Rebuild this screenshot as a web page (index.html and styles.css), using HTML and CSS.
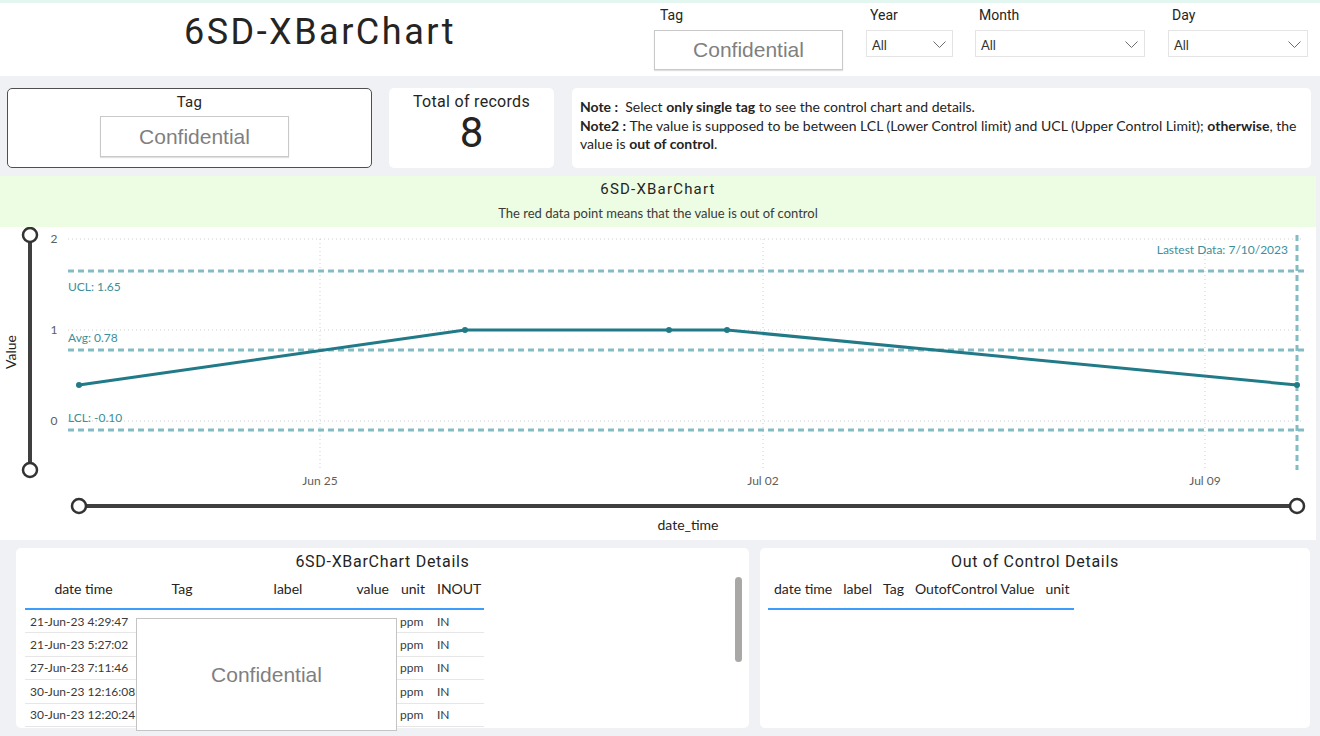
FILE: index.html
```html
<!DOCTYPE html>
<html>
<head>
<meta charset="utf-8">
<title>6SD-XBarChart</title>
<link rel="stylesheet" href="styles.css">
</head>
<body>
<div class="topstrip"></div>
<header class="header">
  <div class="title-wrap"><h1 class="title">6SD-XBarChart</h1></div>
  <div class="filters">
    <div class="filter f-tag">
      <div class="flabel">Tag</div>
      <div class="conf-box">Confidential</div>
    </div>
    <div class="filter f-year">
      <div class="flabel">Year</div>
      <div class="dropdown"><span>All</span><svg class="chev" width="13" height="7" viewBox="0 0 13 7"><path d="M0.5 0.5 L6.5 6.5 L12.5 0.5" fill="none" stroke="#6b6b6b" stroke-width="1"/></svg></div>
    </div>
    <div class="filter f-month">
      <div class="flabel">Month</div>
      <div class="dropdown"><span>All</span><svg class="chev" width="13" height="7" viewBox="0 0 13 7"><path d="M0.5 0.5 L6.5 6.5 L12.5 0.5" fill="none" stroke="#6b6b6b" stroke-width="1"/></svg></div>
    </div>
    <div class="filter f-day">
      <div class="flabel">Day</div>
      <div class="dropdown"><span>All</span><svg class="chev" width="13" height="7" viewBox="0 0 13 7"><path d="M0.5 0.5 L6.5 6.5 L12.5 0.5" fill="none" stroke="#6b6b6b" stroke-width="1"/></svg></div>
    </div>
  </div>
</header>

<section class="cards">
  <div class="card tag-card">
    <div class="card-label">Tag</div>
    <div class="conf-box conf-card">Confidential</div>
  </div>
  <div class="card total-card">
    <div class="card-label">Total of records</div>
    <div class="big-num">8</div>
  </div>
  <div class="card note-card">
    <p><b>Note :</b>&nbsp; Select <b>only single tag</b> to see the control chart and details.</p>
    <p><b>Note2 :</b> The value is supposed to be between LCL (Lower Control limit) and UCL (Upper Control Limit); <b>otherwise</b>, the value is <b>out of control</b>.</p>
  </div>
</section>

<section class="chart">
  <div class="chart-head">
    <div class="chart-title">6SD-XBarChart</div>
    <div class="chart-sub">The red data point means that the value is out of control</div>
  </div>
  <svg class="chart-svg" width="1316" height="313" viewBox="0 0 1316 313">
    <g class="grid">
      <line x1="68" y1="12" x2="1302" y2="12"/>
      <line x1="68" y1="103" x2="1302" y2="103"/>
      <line x1="68" y1="194" x2="1302" y2="194"/>
      <line x1="320" y1="12" x2="320" y2="243"/>
      <line x1="763" y1="12" x2="763" y2="243"/>
      <line x1="1205" y1="12" x2="1205" y2="243"/>
    </g>
    <g class="tick">
      <text x="54" y="16" text-anchor="middle">2</text>
      <text x="54" y="107" text-anchor="middle">1</text>
      <text x="54" y="198" text-anchor="middle">0</text>
    </g>
    <text class="axis-title" transform="translate(16,125) rotate(-90)" text-anchor="middle">Value</text>
    <g class="ref">
      <line x1="68" y1="44" x2="1306" y2="44"/>
      <line x1="68" y1="123" x2="1306" y2="123"/>
      <line x1="68" y1="203" x2="1306" y2="203"/>
      <line x1="1297" y1="8" x2="1297" y2="243"/>
    </g>
    <g class="ref-label">
      <text x="68" y="64">UCL: 1.65</text>
      <text x="68" y="115">Avg: 0.78</text>
      <text x="68" y="195">LCL: -0.10</text>
      <text x="1288" y="27" text-anchor="end">Lastest Data: 7/10/2023</text>
    </g>
    <polyline class="series" points="79,158 465,103 669,103 727,103 1297,158"/>
    <g class="dots">
      <circle cx="79" cy="158" r="3"/>
      <circle cx="465" cy="103" r="3"/>
      <circle cx="669" cy="103" r="3"/>
      <circle cx="727" cy="103" r="3"/>
      <circle cx="1297" cy="158" r="3"/>
    </g>
    <g class="tick">
      <text x="320" y="258" text-anchor="middle">Jun 25</text>
      <text x="763" y="258" text-anchor="middle">Jul 02</text>
      <text x="1205" y="258" text-anchor="middle">Jul 09</text>
    </g>
    <g class="slider">
      <line x1="30" y1="8" x2="30" y2="243"/>
      <circle cx="30" cy="8" r="7"/>
      <circle cx="30" cy="243" r="7"/>
      <line x1="79" y1="279" x2="1297" y2="279"/>
      <circle cx="79" cy="279" r="7"/>
      <circle cx="1297" cy="279" r="7"/>
    </g>
    <text class="axis-title" x="688" y="303" text-anchor="middle">date_time</text>
  </svg>
</section>

<section class="bottom">
  <div class="panel details">
    <div class="panel-title">6SD-XBarChart Details</div>
    <table class="tbl tbl-details">
      <thead>
        <tr>
          <th class="c-date">date time</th>
          <th class="c-tag">Tag</th>
          <th class="c-label">label</th>
          <th class="c-value">value</th>
          <th class="c-unit">unit</th>
          <th class="c-inout">INOUT</th>
        </tr>
      </thead>
      <tbody>
        <tr><td>21-Jun-23 4:29:47</td><td></td><td></td><td></td><td>ppm</td><td>IN</td></tr>
        <tr><td>21-Jun-23 5:27:02</td><td></td><td></td><td></td><td>ppm</td><td>IN</td></tr>
        <tr><td>27-Jun-23 7:11:46</td><td></td><td></td><td></td><td>ppm</td><td>IN</td></tr>
        <tr><td>30-Jun-23 12:16:08</td><td></td><td></td><td></td><td>ppm</td><td>IN</td></tr>
        <tr><td>30-Jun-23 12:20:24</td><td></td><td></td><td></td><td>ppm</td><td>IN</td></tr>
      </tbody>
    </table>
    <div class="scrollbar"></div>
    <div class="conf-overlay">Confidential</div>
  </div>
  <div class="panel ooc">
    <div class="panel-title">Out of Control Details</div>
    <table class="tbl tbl-ooc">
      <thead>
        <tr>
          <th>date time</th>
          <th>label</th>
          <th>Tag</th>
          <th>OutofControl Value</th>
          <th>unit</th>
        </tr>
      </thead>
    </table>
  </div>
</section>
</body>
</html>
```

FILE: styles.css
```css
* { box-sizing: border-box; margin: 0; padding: 0; }
html, body { width: 1320px; height: 736px; overflow: hidden; }
body {
  background: #f0f1f5;
  font-family: "Lato", "Noto Sans", sans-serif;
  color: #252423;
}

.topstrip { height: 3px; background: #e4f6f0; }

.header { height: 73px; background: #fff; display: flex; }
.title-wrap { width: 640px; padding-top: 9px; text-align: center; }
.title {
  font-family: "Roboto", "DejaVu Sans", sans-serif;
  font-weight: 400;
  font-size: 36px;
  line-height: 40px;
  letter-spacing: 2.5px;
  color: #252423;
}

.filters { display: flex; padding-left: 14px; padding-top: 4px; }
.filter { display: flex; flex-direction: column; }
.f-tag { width: 189px; margin-right: 23px; }
.f-year { width: 87px; margin-right: 22px; }
.f-month { width: 170px; margin-right: 23px; }
.f-day { width: 140px; }
.flabel {
  font-family: "Roboto", sans-serif;
  font-size: 14px;
  line-height: 16px;
  height: 16px;
  padding-left: 4px;
  margin-bottom: 7px;
}
.f-tag .flabel { padding-left: 6px; }

.conf-box {
  height: 40px;
  border: 1px solid #c9c9c9;
  box-shadow: 0 1px 1px rgba(0,0,0,0.12);
  display: flex;
  align-items: center;
  justify-content: center;
  font-family: "Liberation Sans", Arial, sans-serif;
  font-size: 21px;
  color: #7f7f7f;
  background: #fff;
}

.dropdown {
  height: 27px;
  border: 1px solid #e4e4e4;
  display: flex;
  align-items: center;
  justify-content: space-between;
  padding: 2px 6px 0 5px;
  font-size: 13px;
  color: #333;
}
.chev { display: block; }

.cards { display: flex; margin-top: 12px; padding-left: 7px; height: 80px; }
.card { background: #fff; border-radius: 5px; }
.tag-card {
  width: 365px;
  margin-right: 17px;
  border: 1px solid #4f4f4f;
  display: flex;
  flex-direction: column;
  align-items: center;
  padding-top: 4px;
}
.card-label {
  font-family: "Roboto", sans-serif;
  font-size: 15px;
  line-height: 18px;
  letter-spacing: 0.3px;
}
.conf-card { width: 189px; height: 41px; margin-top: 5px; margin-left: 10px; }
.total-card {
  width: 165px;
  margin-right: 18px;
  display: flex;
  flex-direction: column;
  align-items: center;
  padding-top: 5px;
}
.total-card .card-label { font-size: 16px; }
.big-num {
  font-family: "Roboto", sans-serif;
  font-size: 42px;
  line-height: 44px;
}
.note-card {
  width: 739px;
  padding: 10px 8px;
  font-size: 14px;
  line-height: 18.5px;
  color: #252423;
}

.chart { margin-top: 8px; width: 1316px; }
.chart-head { height: 51px; background: #edfde4; text-align: center; padding-top: 4px; }
.chart-title {
  font-family: "Roboto", sans-serif;
  font-size: 15px;
  line-height: 18px;
  letter-spacing: 1.2px;
}
.chart-sub { font-size: 13px; line-height: 16px; margin-top: 7px; color: #3b3a39; }
.chart-svg { display: block; background: #fff; }

.grid line { stroke: #cfcfcf; stroke-width: 1; stroke-dasharray: 1 3; }
.tick text { font-family: "Lato", sans-serif; font-size: 12px; fill: #605e5c; }
.axis-title { font-family: "Lato", sans-serif; font-size: 14px; fill: #252423; }
.ref line { stroke: #85bcc4; stroke-width: 3; stroke-dasharray: 6 4; }
.ref-label text { font-family: "Lato", sans-serif; font-size: 12px; fill: #3b8f9a; }
.series { fill: none; stroke: #217a87; stroke-width: 3; stroke-linejoin: round; }
.dots circle { fill: #217a87; }
.slider line { stroke: #3f3f3f; stroke-width: 4; }
.slider circle { fill: #fff; stroke: #333; stroke-width: 2.5; }

.bottom { display: flex; margin-top: 8px; padding-left: 16px; height: 180px; }
.panel { background: #fff; border-radius: 5px; position: relative; }
.details { width: 733px; margin-right: 11px; }
.ooc { width: 550px; }
.panel-title {
  font-family: "Roboto", sans-serif;
  font-size: 16px;
  line-height: 20px;
  letter-spacing: 0.7px;
  text-align: center;
  padding-top: 4px;
  color: #252423;
}

.tbl { border-collapse: collapse; }
.tbl th {
  height: 37px;
  padding: 8px 0 0;
  vertical-align: top;
  font-weight: 400;
  font-size: 14px;
  line-height: 18px;
  color: #252423;
  border-bottom: 2px solid #3c9dfa;
  white-space: nowrap;
}
.tbl td {
  height: 23.5px;
  font-size: 12px;
  color: #3a3a3a;
  border-bottom: 1px solid #e6e6e6;
  white-space: nowrap;
  padding: 0 0 0 5px;
}
.tbl-details { margin-left: 9px; width: 459px; table-layout: fixed; }
.c-date { width: 117px; text-align: center; }
.c-tag { width: 80px; text-align: center; }
.c-label { width: 132px; text-align: center; }
.c-value { width: 41px; text-align: right; padding-right: 6px !important; }
.c-unit { width: 36px; text-align: left; padding-left: 6px !important; }
.c-inout { width: 53px; text-align: left; padding-left: 6px !important; }
.tbl-details td:nth-child(5) { padding-left: 5px; }
.tbl-details td:nth-child(6) { padding-left: 6px; }

.tbl-ooc { margin-left: 8px; }
.tbl-ooc th { padding-left: 6px; padding-right: 5px; text-align: left; }

.scrollbar {
  position: absolute;
  left: 719px;
  top: 29px;
  width: 7px;
  height: 85px;
  border-radius: 4px;
  background: #a9a8a6;
}
.conf-overlay {
  position: absolute;
  left: 120px;
  top: 70px;
  width: 261px;
  height: 113px;
  background: #fff;
  border: 1px solid #c4c4c4;
  display: flex;
  align-items: center;
  justify-content: center;
  font-family: "Liberation Sans", Arial, sans-serif;
  font-size: 21px;
  color: #7f7f7f;
}
```
